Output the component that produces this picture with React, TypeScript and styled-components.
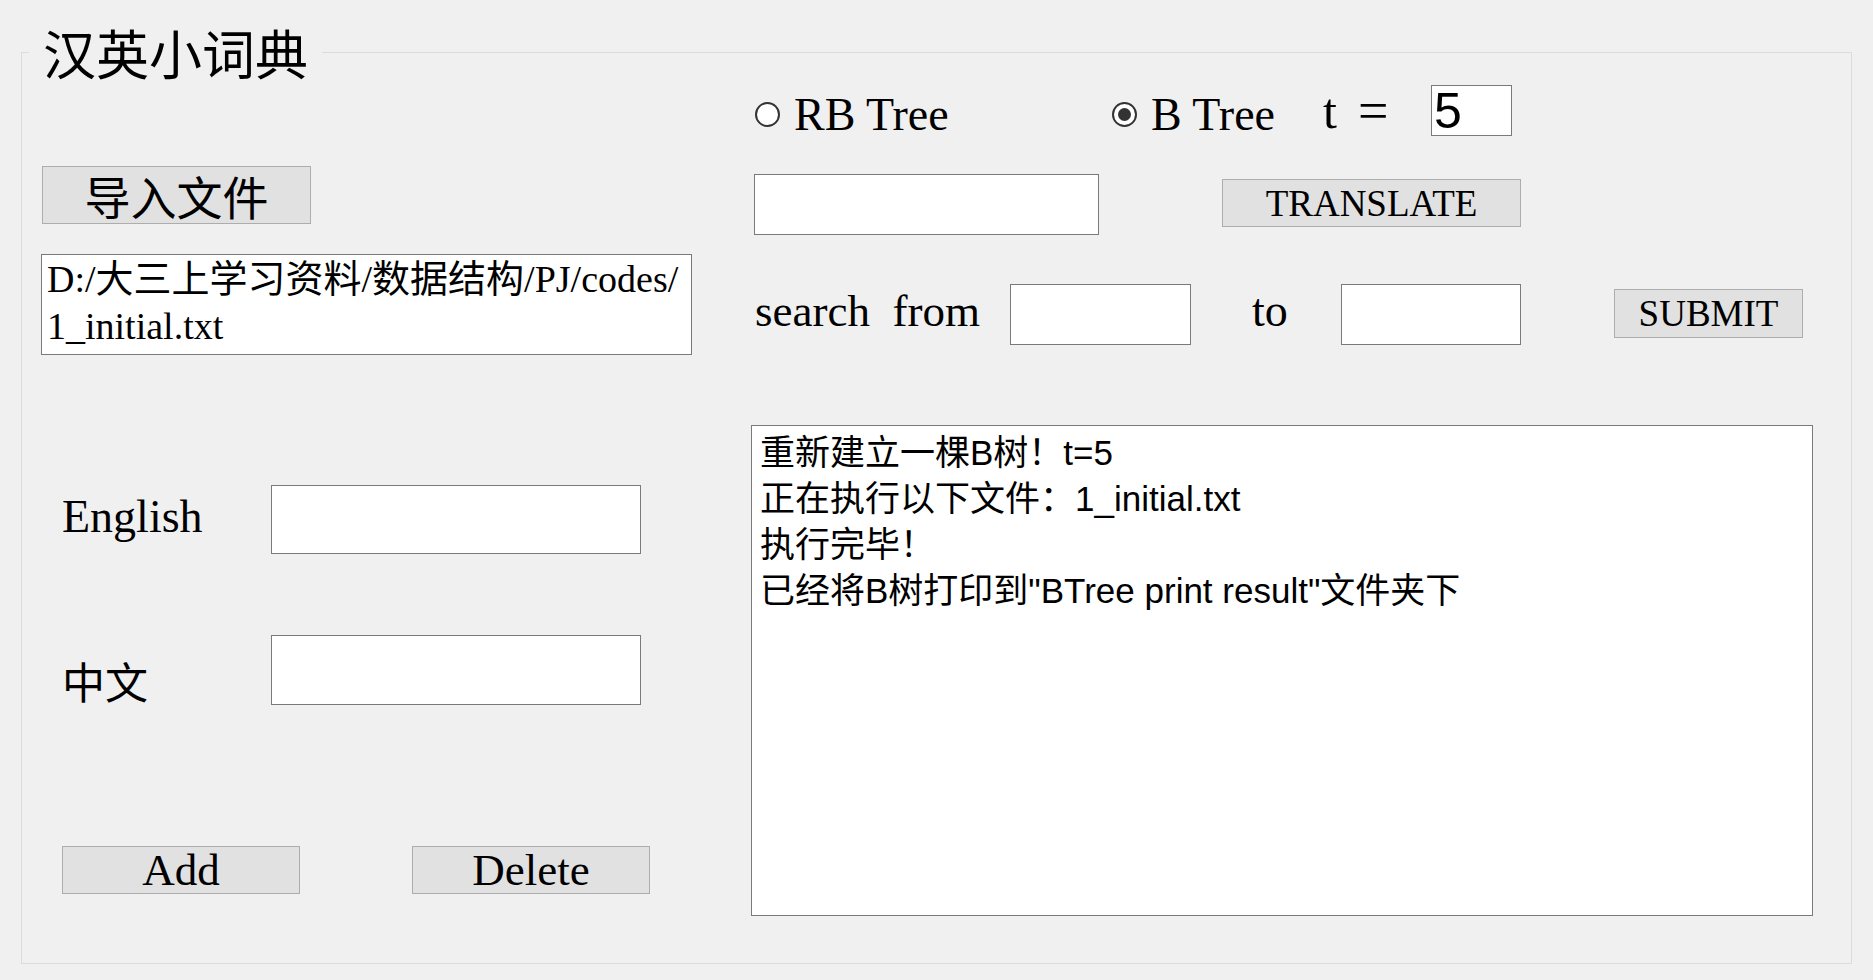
import React from "react";
import styled, { createGlobalStyle } from "styled-components";

const SERIF = `"Liberation Serif", "Noto Sans CJK SC", serif`;
const SANS = `"Liberation Sans", "Noto Sans CJK SC", sans-serif`;
const CJK = `"Noto Sans CJK SC", sans-serif`;

const GlobalStyle = createGlobalStyle`
  html, body { margin: 0; padding: 0; background: #f0f0f0; }
  body { font-family: ${SERIF}; color: #000; }
  #root { width: 1873px; height: 980px; overflow: hidden; }
`;

const Frame = styled.fieldset`
  box-sizing: border-box;
  margin: 20px 0 0 21px;
  width: 1831px;
  height: 944px;
  padding: 0;
  min-width: 0;
  border: 1px solid #dcdcdc;
`;

const Title = styled.legend`
  margin-left: 7px;
  padding: 0 14px;
  font-family: ${CJK};
  font-size: 53px;
  line-height: 64px;
`;

const Layout = styled.div`
  display: flex;
  align-items: flex-start;
`;

const LeftColumn = styled.div`
  box-sizing: border-box;
  width: 670px;
  padding-left: 19px;
  display: flex;
  flex-direction: column;
  align-items: flex-start;
`;

const RightColumn = styled.div`
  width: 1062px;
  margin-left: 59px;
  display: flex;
  flex-direction: column;
  align-items: flex-start;
`;

const PushButton = styled.button<{ $w: number; $h: number; $size: number; $cjk?: boolean }>`
  box-sizing: border-box;
  flex: none;
  width: ${(p) => p.$w}px;
  height: ${(p) => p.$h}px;
  margin: 0;
  padding: 0;
  background: #e1e1e1;
  border: 1px solid #adadad;
  border-radius: 0;
  color: #000;
  font-family: ${(p) => (p.$cjk ? CJK : SERIF)};
  font-size: ${(p) => p.$size}px;
  line-height: 1;
  display: flex;
  align-items: center;
  justify-content: center;
  white-space: nowrap;
`;

const ImportButton = styled(PushButton)`
  margin: 82px 0 0 1px;
`;

const TextBox = styled.div`
  box-sizing: border-box;
  background: #fff;
  border: 1px solid #7a7a7a;
  white-space: nowrap;
  overflow: hidden;
`;

const PathBox = styled(TextBox)`
  margin-top: 30px;
  width: 651px;
  height: 101px;
  padding: 1px 5px;
  font-family: ${SERIF};
  font-size: 38px;
  line-height: 47px;
`;

const OutputBox = styled(TextBox)`
  margin-top: 80px;
  width: 1062px;
  height: 491px;
  padding: 4px 8px 0;
  font-family: ${SANS};
  font-size: 35px;
  line-height: 46px;
`;

const Line = styled.div`
  height: 46px;
`;

const PathLine = styled.div`
  height: 47px;
`;

const Field = styled.input<{ $w: number; $h: number }>`
  box-sizing: border-box;
  flex: none;
  width: ${(p) => p.$w}px;
  height: ${(p) => p.$h}px;
  margin: 0;
  padding: 0 2px;
  background: #fff;
  border: 1px solid #7a7a7a;
  border-radius: 0;
  outline: none;
  color: #000;
  font-family: ${SANS};
  font-size: 50px;
`;

const FieldRow = styled.div<{ $top: number }>`
  display: flex;
  align-items: center;
  margin-top: ${(p) => p.$top}px;
`;

const FieldLabel = styled.span<{ $left: number; $w: number; $drop?: number; $cjk?: boolean; $size: number }>`
  flex: none;
  box-sizing: border-box;
  width: ${(p) => p.$w}px;
  margin-left: ${(p) => p.$left}px;
  margin-top: ${(p) => p.$drop ?? 0}px;
  font-family: ${(p) => (p.$cjk ? CJK : SERIF)};
  font-size: ${(p) => p.$size}px;
  line-height: 1;
  white-space: pre;
`;

const ButtonRow = styled.div`
  display: flex;
  gap: 112px;
  margin: 141px 0 0 21px;
`;

const RadioRow = styled.div`
  display: flex;
  align-items: center;
  height: 51px;
  margin-top: 1px;
`;

const RadioOption = styled.label<{ $w: number; $left?: number }>`
  flex: none;
  width: ${(p) => p.$w}px;
  margin-left: ${(p) => p.$left ?? 0}px;
  margin-top: 8px;
  display: flex;
  align-items: center;
  font-family: ${SERIF};
  font-size: 46px;
  line-height: 1;
`;

const RadioMark = styled.span<{ $checked?: boolean }>`
  box-sizing: border-box;
  flex: none;
  width: 25px;
  height: 25px;
  margin-right: 14px;
  border-radius: 50%;
  border: 2px solid #333;
  background: #fff;
  display: flex;
  align-items: center;
  justify-content: center;
  &::after {
    content: "";
    width: 13px;
    height: 13px;
    border-radius: 50%;
    background: ${(p) => (p.$checked ? "#333" : "transparent")};
  }
`;

const MathText = styled.span<{ $w: number; $size: number }>`
  flex: none;
  width: ${(p) => p.$w}px;
  font-family: ${SERIF};
  font-size: ${(p) => p.$size}px;
  line-height: 1;
`;

const TranslateRow = styled.div`
  display: flex;
  align-items: flex-start;
  margin: 38px 0 0 3px;
`;

const TranslateButton = styled(PushButton)`
  margin: 5px 0 0 123px;
`;

const SearchRow = styled.div`
  display: flex;
  align-items: center;
  margin-top: 49px;
`;

const SubmitButton = styled(PushButton)`
  margin-left: 93px;
  margin-top: -3px;
`;

export default function App() {
  return (
    <>
      <GlobalStyle />
      <Frame>
        <Title>汉英小词典</Title>
        <Layout>
          <LeftColumn>
            <ImportButton $w={269} $h={58} $size={46} $cjk>
              导入文件
            </ImportButton>
            <PathBox>
              <PathLine>D:/大三上学习资料/数据结构/PJ/codes/</PathLine>
              <PathLine>1_initial.txt</PathLine>
            </PathBox>
            <FieldRow $top={130}>
              <FieldLabel $left={21} $w={209} $size={46} $drop={-6}>
                English
              </FieldLabel>
              <Field $w={370} $h={69} readOnly />
            </FieldRow>
            <FieldRow $top={81}>
              <FieldLabel $left={21} $w={209} $size={43} $drop={20} $cjk>
                中文
              </FieldLabel>
              <Field $w={370} $h={70} readOnly />
            </FieldRow>
            <ButtonRow>
              <PushButton $w={238} $h={48} $size={45}>
                Add
              </PushButton>
              <PushButton $w={238} $h={48} $size={45}>
                Delete
              </PushButton>
            </ButtonRow>
          </LeftColumn>
          <RightColumn>
            <RadioRow>
              <RadioOption $w={357} $left={4}>
                <RadioMark />
                RB Tree
              </RadioOption>
              <RadioOption $w={211}>
                <RadioMark $checked />
                B Tree
              </RadioOption>
              <MathText $w={35} $size={50}>
                t
              </MathText>
              <MathText $w={73} $size={54}>
                =
              </MathText>
              <Field $w={81} $h={51} value="5" readOnly />
            </RadioRow>
            <TranslateRow>
              <Field $w={345} $h={61} readOnly />
              <TranslateButton $w={299} $h={48} $size={37}>
                TRANSLATE
              </TranslateButton>
            </TranslateRow>
            <SearchRow>
              <FieldLabel $left={4} $w={255} $size={45} $drop={-7}>
                {"search  from"}
              </FieldLabel>
              <Field $w={181} $h={61} readOnly />
              <FieldLabel $left={61} $w={89} $size={46} $drop={-7}>
                to
              </FieldLabel>
              <Field $w={180} $h={61} readOnly />
              <SubmitButton $w={189} $h={49} $size={37}>
                SUBMIT
              </SubmitButton>
            </SearchRow>
            <OutputBox>
              <Line>重新建立一棵B树！t=5</Line>
              <Line>正在执行以下文件：1_initial.txt</Line>
              <Line>执行完毕！</Line>
              <Line>已经将B树打印到"BTree print result"文件夹下</Line>
            </OutputBox>
          </RightColumn>
        </Layout>
      </Frame>
    </>
  );
}
